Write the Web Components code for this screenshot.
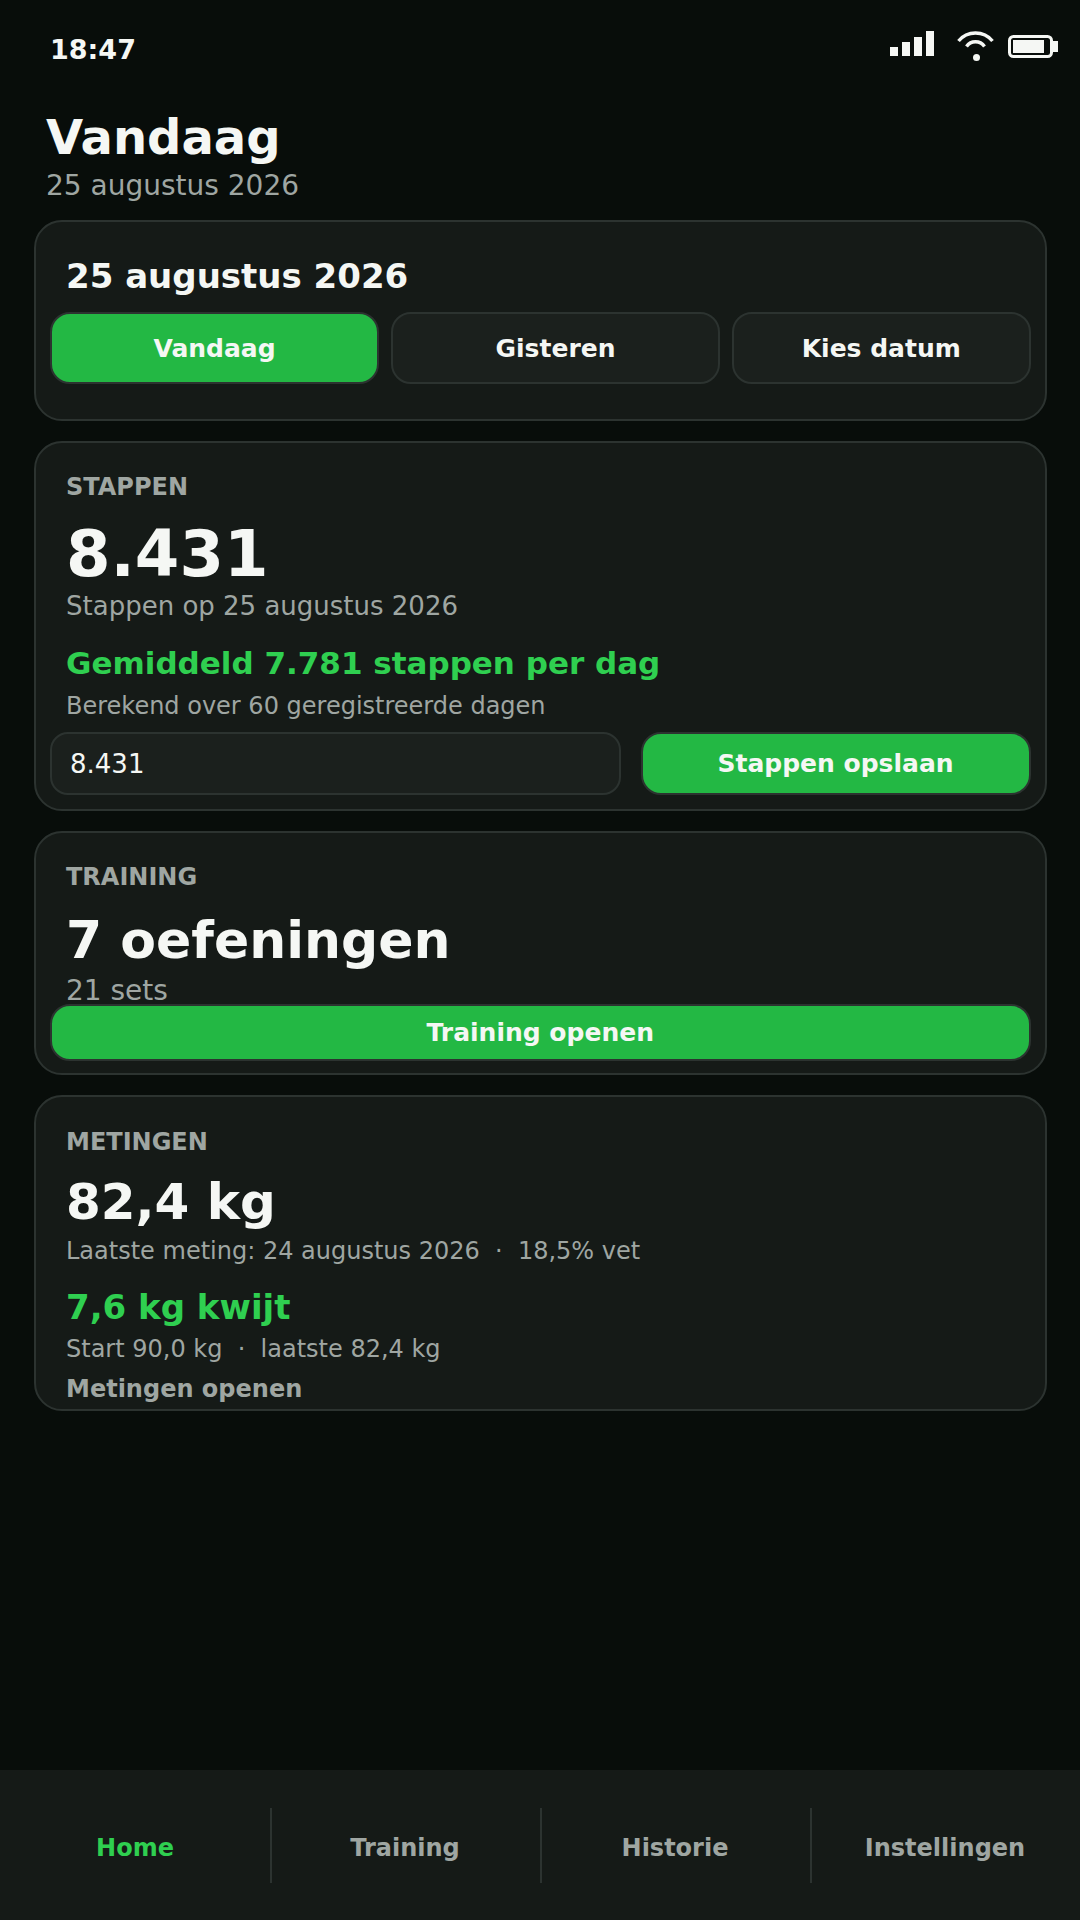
<!DOCTYPE html>
<html lang="nl">
<head>
<meta charset="utf-8">
<title>Vandaag</title>
<style>
  html, body { margin: 0; height: 100%; }
  body {
    background: #080d0a;
    color: #f5f7f4;
    font-family: "DejaVu Sans", sans-serif;
  }
  #app {
    height: 1920px;
    display: flex;
    flex-direction: column;
  }
  #inhoud {
    flex: 1;
    display: flex;
    flex-direction: column;
    gap: 20px;
    padding: 0 33.5px 0 34px;
  }
</style>
</head>
<body>
<div id="app">
  <status-balk tijd="18:47"></status-balk>
  <dag-kop titel="Vandaag" datum="25 augustus 2026"></dag-kop>
  <div id="inhoud">
    <datum-kaart datum="25 augustus 2026"></datum-kaart>
    <stappen-kaart></stappen-kaart>
    <training-kaart></training-kaart>
    <metingen-kaart></metingen-kaart>
  </div>
  <onder-nav></onder-nav>
</div>

<script>
const maakElement = (naam, html) => {
  customElements.define(naam, class extends HTMLElement {
    constructor() {
      super();
      this.attachShadow({ mode: "open" });
      this.shadowRoot.innerHTML = html(this);
    }
  });
};

maakElement("status-balk", (el) => /*html*/`
  <style>
    :host { display: flex; justify-content: space-between; height: 96px; box-sizing: border-box; padding: 31px 20px 0 50px; }
    span { margin-top: 1.5px; font-size: 27px; font-weight: 700; line-height: 34px; }
    svg { display: block; }
  </style>
  <span>${el.getAttribute("tijd")}</span>
  <svg width="170" height="32" viewBox="0 0 170 32" fill="#f5f7f4">
    <rect x="0" y="16" width="8" height="9"/>
    <rect x="12" y="11" width="8" height="14"/>
    <rect x="24" y="6" width="8" height="19"/>
    <rect x="36" y="0" width="8" height="25"/>
    <path d="M68.5 10 A22 22 0 0 1 102.5 10" fill="none" stroke="#f5f7f4" stroke-width="3.4"/>
    <path d="M76.5 15.5 A11 11 0 0 1 94.5 15.5" fill="none" stroke="#f5f7f4" stroke-width="3.4"/>
    <circle cx="86.5" cy="26.5" r="3.5"/>
    <rect x="119.5" y="5.5" width="42" height="20" rx="4" fill="none" stroke="#f5f7f4" stroke-width="3"/>
    <rect x="123" y="9" width="31" height="13"/>
    <rect x="163" y="10" width="5" height="11"/>
  </svg>
`);

maakElement("dag-kop", (el) => /*html*/`
  <style>
    :host { display: block; padding: 14px 46px 16px; }
    h1 { margin: 0; font-size: 48px; font-weight: 700; line-height: 54px; }
    p { margin: 3px 0 0; font-size: 28px; line-height: 37px; color: #9fa6a2; }
  </style>
  <h1>${el.getAttribute("titel")}</h1>
  <p>${el.getAttribute("datum")}</p>
`);

// kaart met rand; de tekst springt 16px verder in dan de knoppen
maakElement("app-kaart", () => /*html*/`
  <style>
    :host {
      display: flex;
      flex-direction: column;
      box-sizing: border-box;
      background: #151a17;
      border: 2px solid #2c3330;
      border-radius: 28px;
      padding: 0 14px;
      overflow: hidden;
    }
  </style>
  <slot></slot>
`);

maakElement("app-knop", (el) => /*html*/`
  <style>
    :host {
      display: flex;
      align-items: center;
      justify-content: center;
      box-sizing: border-box;
      border: 2px solid #2c3330;
      border-radius: 20px;
      background: ${el.hasAttribute("primair") ? "#23b844" : "#1b201d"};
      color: #f5f7f4;
      font-size: 25px;
      font-weight: 700;
    }
  </style>
  <slot></slot>
`);

const tekstStijl = /*css*/`
  :host { display: block; }
  .label { margin: 0 16px; font-size: 24px; font-weight: 700; line-height: 28px; color: #9fa6a2; }
  .sub { margin: 0 16px; color: #9fa6a2; }
  .winst { margin: 0 16px; font-weight: 700; color: #2fcf50; }
  .groot { margin: 0 16px; font-weight: 700; }
`;

maakElement("datum-kaart", (el) => /*html*/`
  <style>
    ${tekstStijl}
    app-kaart { height: 201px; }
    h2 { margin: 34px 16px 0; font-size: 34px; font-weight: 700; line-height: 40px; }
    .rij { display: grid; grid-template-columns: 329px 329px 298.5px; gap: 12px; margin-top: 16px; }
    app-knop { height: 72px; }
  </style>
  <app-kaart>
    <h2>${el.getAttribute("datum")}</h2>
    <div class="rij">
      <app-knop primair>Vandaag</app-knop>
      <app-knop>Gisteren</app-knop>
      <app-knop>Kies datum</app-knop>
    </div>
  </app-kaart>
`);

maakElement("stappen-kaart", () => /*html*/`
  <style>
    ${tekstStijl}
    app-kaart { height: 370px; }
    .label { margin-top: 30px; }
    .groot { margin-top: 16px; font-size: 64px; line-height: 75px; }
    .sub1 { margin-top: -1px; font-size: 26px; line-height: 30px; }
    .winst { margin-top: 22px; font-size: 31px; line-height: 40px; }
    .sub2 { margin-top: 8px; font-size: 24px; line-height: 30px; }
    .rij { display: flex; gap: 20px; margin-top: 11px; }
    .veld {
      flex: 1;
      box-sizing: border-box;
      height: 63px;
      padding-left: 18px;
      display: flex;
      align-items: center;
      background: #1b201d;
      border: 2px solid #2c3330;
      border-radius: 18px;
      font-size: 26px;
    }
    app-knop { width: 390px; height: 63px; }
  </style>
  <app-kaart>
    <p class="label">STAPPEN</p>
    <div class="groot">8.431</div>
    <p class="sub sub1">Stappen op 25 augustus 2026</p>
    <div class="winst">Gemiddeld 7.781 stappen per dag</div>
    <p class="sub sub2">Berekend over 60 geregistreerde dagen</p>
    <div class="rij">
      <div class="veld">8.431</div>
      <app-knop primair>Stappen opslaan</app-knop>
    </div>
  </app-kaart>
`);

maakElement("training-kaart", () => /*html*/`
  <style>
    ${tekstStijl}
    app-kaart { height: 244px; }
    .label { margin-top: 30px; }
    .groot { margin-top: 17px; font-size: 52px; line-height: 65px; }
    .sub { margin-top: 1px; font-size: 28px; line-height: 34px; }
    app-knop { height: 57px; margin-top: -4px; }
  </style>
  <app-kaart>
    <p class="label">TRAINING</p>
    <div class="groot">7 oefeningen</div>
    <p class="sub">21 sets</p>
    <app-knop primair>Training openen</app-knop>
  </app-kaart>
`);

maakElement("metingen-kaart", () => /*html*/`
  <style>
    ${tekstStijl}
    app-kaart { height: 316px; }
    .label { margin-top: 31px; }
    .groot { margin-top: 16px; font-size: 50px; line-height: 60px; }
    .sub1 { margin-top: 4px; font-size: 24px; line-height: 30px; }
    .winst { margin-top: 21px; font-size: 34px; line-height: 40px; }
    .sub2 { margin-top: 7px; font-size: 24px; line-height: 30px; }
    .link { margin: 10px 16px 0; font-size: 24px; font-weight: 700; line-height: 30px; color: #9fa6a2; }
  </style>
  <app-kaart>
    <p class="label">METINGEN</p>
    <div class="groot">82,4 kg</div>
    <p class="sub sub1">Laatste meting: 24 augustus 2026 &nbsp;·&nbsp; 18,5% vet</p>
    <div class="winst">7,6 kg kwijt</div>
    <p class="sub sub2">Start 90,0 kg &nbsp;·&nbsp; laatste 82,4 kg</p>
    <div class="link">Metingen openen</div>
  </app-kaart>
`);

// scheidingslijnen als achtergrond, zodat de tekst midden in de kolom blijft
maakElement("onder-nav", () => /*html*/`
  <style>
    :host {
      display: grid;
      grid-template-columns: repeat(4, 1fr);
      align-items: center;
      height: 150px;
      background: #151a17;
    }
    div {
      display: flex;
      align-items: center;
      justify-content: center;
      box-sizing: border-box;
      height: 75px;
      padding-top: 6px;
      font-size: 24px;
      font-weight: 700;
      color: #9fa6a2;
      background: linear-gradient(#2c3330, #2c3330) left / 2px 100% no-repeat;
    }
    div:first-of-type { background: none; color: #2fcf50; }
  </style>
  <div>Home</div>
  <div>Training</div>
  <div>Historie</div>
  <div>Instellingen</div>
`);
</script>
</body>
</html>
